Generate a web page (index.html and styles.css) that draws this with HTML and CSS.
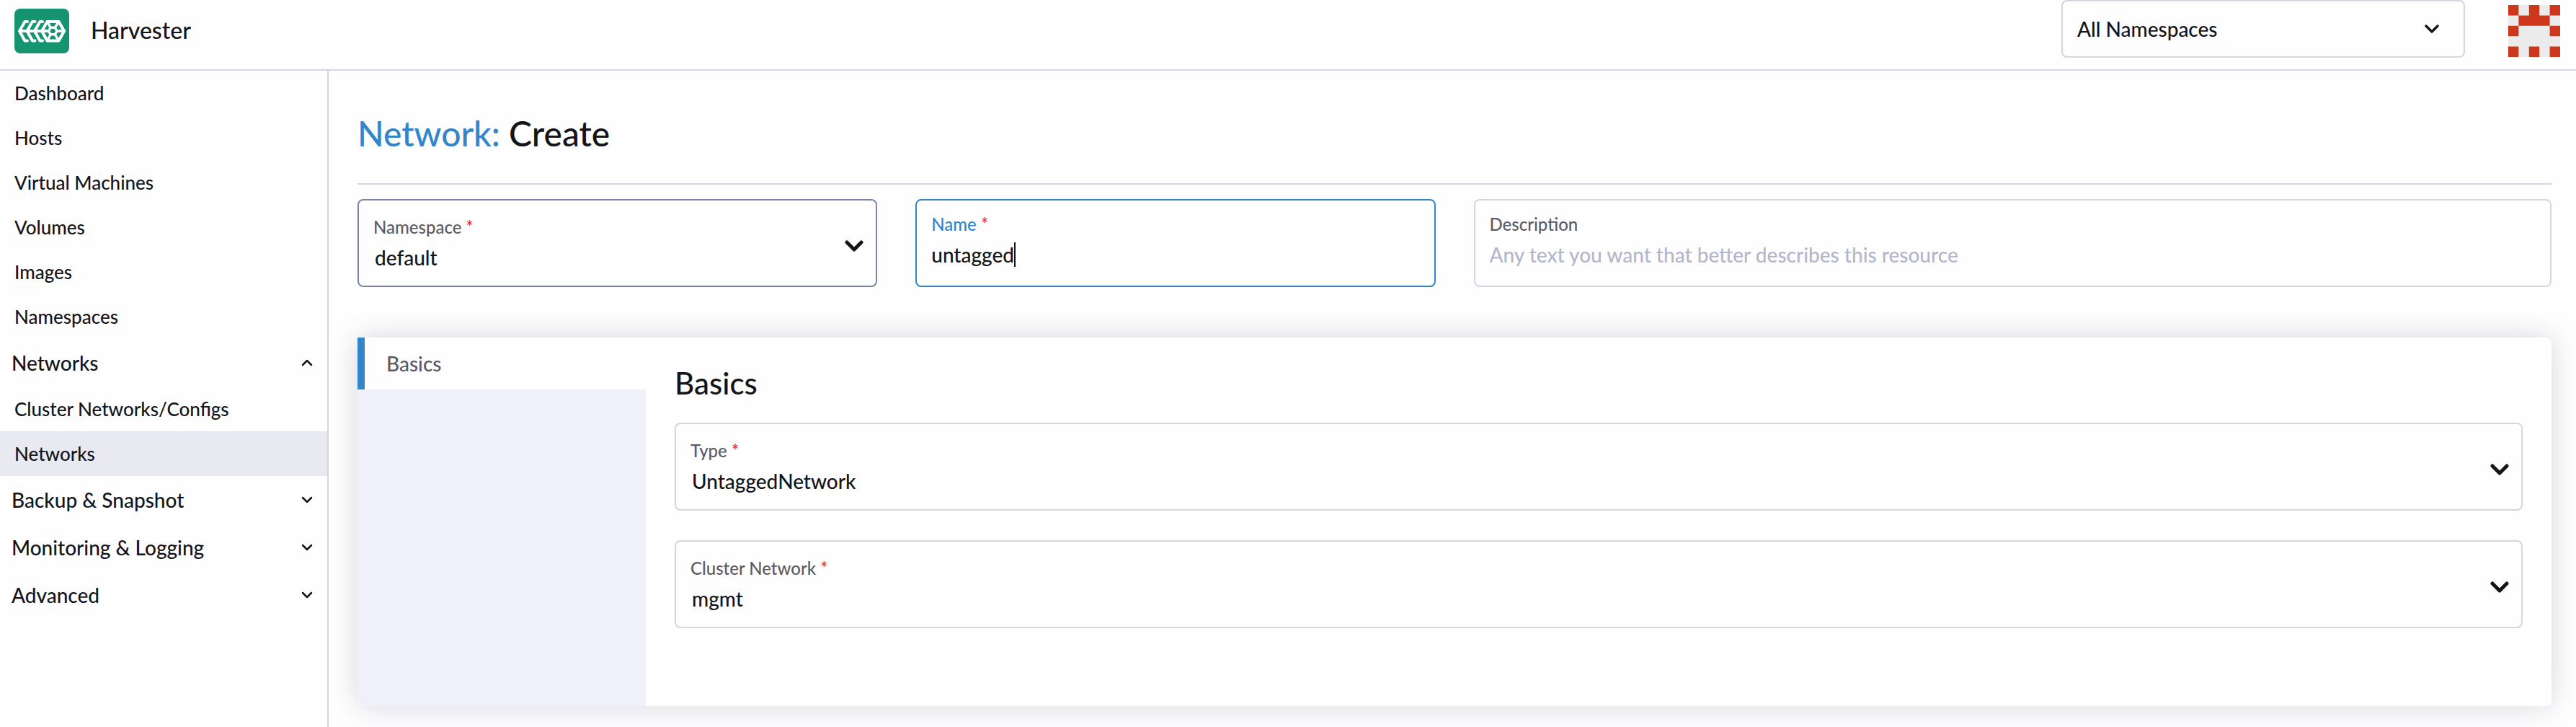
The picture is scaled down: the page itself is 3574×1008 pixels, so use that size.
FILE: index.html
```html
<!DOCTYPE html>
<html lang="en">
<head>
<meta charset="utf-8">
<title>Harvester</title>
<link rel="stylesheet" href="styles.css">
</head>
<body>
<header class="topbar">
  <a class="brand" href="#">
    <svg class="brand-logo" viewBox="0 0 76 62" aria-hidden="true">
      <rect width="76" height="62" rx="8" fill="#149570"/>
      <g fill="none" stroke="#fff" stroke-width="4" stroke-linecap="round" stroke-linejoin="round">
        <path d="M7 31H46M18 18H14.500L7 31L14.500 44.500H18M28.500 18H25L17.500 31L25 44.500H28.500M39 18H35.500L28 31L35.500 44.500H39"/>
        <path d="M45.500 18H61.500L69 31L61.500 44.500H45.500L38 31Z"/>
        <path stroke-width="3.400" d="M50.200 26.200H56.200L59 31L56.200 35.800H50.200L47.400 31Z"/>
        <path stroke-width="3.400" d="M45.500 18L50 26M61.500 18L56.500 26M69 31H59M61.500 44.500L56.500 36M45.500 44.500L50 36"/>
      </g>
    </svg>
    <span class="brand-name">Harvester</span>
  </a>
  <div class="topbar-tools">
    <div class="namespace-filter">
      <select class="select" aria-label="Namespace filter"><option>All Namespaces</option></select>
      <svg class="chevron chevron-medium" viewBox="0 0 20 12" aria-hidden="true"><path d="M2 2L10 10L18 2"/></svg>
    </div>
    <svg class="avatar" viewBox="0 0 5 5" role="img" aria-label="User">
      <path fill="#ebebeb" d="M0 0H5V5H0Z"/>
      <path fill="#cd381d" d="M0 0H1V1H0ZM2 0H3V1H2ZM4 0H5V1H4ZM1 1H4V2H1ZM0 2H1V3H0ZM4 2H5V3H4ZM0 4H1V5H0ZM2 4H3V5H2ZM4 4H5V5H4Z"/>
    </svg>
  </div>
</header>
<div class="layout">
  <nav class="sidebar">
    <a class="nav-item" href="#">Dashboard</a>
    <a class="nav-item" href="#">Hosts</a>
    <a class="nav-item" href="#">Virtual Machines</a>
    <a class="nav-item" href="#">Volumes</a>
    <a class="nav-item" href="#">Images</a>
    <a class="nav-item" href="#">Namespaces</a>
    <button class="nav-group" type="button" aria-expanded="true">Networks
      <svg class="chevron chevron-small" viewBox="0 0 16 10" aria-hidden="true"><path d="M2 8L8 2L14 8"/></svg></button>
    <a class="nav-item" href="#">Cluster Networks/Configs</a>
    <a class="nav-item nav-item-active" href="#" aria-current="page">Networks</a>
    <button class="nav-group" type="button" aria-expanded="false">Backup &amp; Snapshot
      <svg class="chevron chevron-small" viewBox="0 0 16 10" aria-hidden="true"><path d="M2 2L8 8L14 2"/></svg></button>
    <button class="nav-group" type="button" aria-expanded="false">Monitoring &amp; Logging
      <svg class="chevron chevron-small" viewBox="0 0 16 10" aria-hidden="true"><path d="M2 2L8 8L14 2"/></svg></button>
    <button class="nav-group" type="button" aria-expanded="false">Advanced
      <svg class="chevron chevron-small" viewBox="0 0 16 10" aria-hidden="true"><path d="M2 2L8 8L14 2"/></svg></button>
  </nav>
  <main class="content">
    <h1 class="page-title"><a class="page-title-link" href="#">Network:</a> Create</h1>
    <form class="form">
      <div class="identity">
        <div class="field field-select field-strong">
          <div class="field-body">
            <label class="label" for="namespace">Namespace <span class="required">*</span></label>
            <select class="select" id="namespace"><option>default</option></select>
          </div>
          <svg class="chevron chevron-large" viewBox="0 0 26 16" aria-hidden="true"><path d="M3 3L13 13L23 3"/></svg>
        </div>
        <div class="field field-focused">
          <div class="field-body">
            <label class="label" for="name">Name <span class="required">*</span></label>
            <div class="input-line">
              <input class="input input-fitted" id="name" type="text" value="untagged">
              <span class="caret"></span>
            </div>
          </div>
        </div>
        <div class="field field-wide">
          <div class="field-body">
            <label class="label" for="description">Description</label>
            <input class="input" id="description" type="text" placeholder="Any text you want that better describes this resource">
          </div>
        </div>
      </div>
      <section class="card">
        <div class="tabs" role="tablist">
          <button class="tab" type="button" role="tab" aria-selected="true">Basics</button>
        </div>
        <div class="panel" role="tabpanel">
          <h2 class="panel-title">Basics</h2>
          <div class="panel-fields">
            <div class="field field-select">
              <div class="field-body">
                <label class="label" for="type">Type <span class="required">*</span></label>
                <select class="select" id="type"><option>UntaggedNetwork</option></select>
              </div>
              <svg class="chevron chevron-large" viewBox="0 0 26 16" aria-hidden="true"><path d="M3 3L13 13L23 3"/></svg>
            </div>
            <div class="field field-select">
              <div class="field-body">
                <label class="label" for="cluster-network">Cluster Network <span class="required">*</span></label>
                <select class="select" id="cluster-network"><option>mgmt</option></select>
              </div>
              <svg class="chevron chevron-large" viewBox="0 0 26 16" aria-hidden="true"><path d="M3 3L13 13L23 3"/></svg>
            </div>
          </div>
        </div>
      </section>
    </form>
  </main>
</div>
</body>
</html>
```
FILE: styles.css
```css
*, *::before, *::after { box-sizing: border-box; }

:root {
  --text: #141419;
  --muted: #5b5b66;
  --border: #d3d5e2;
  --primary: #3186ca;
}

body {
  margin: 0;
  min-height: 100vh;
  display: flex;
  flex-direction: column;
  background: #fefefe;
  color: var(--text);
  font: 500 28px/34px Lato, "Liberation Sans", sans-serif;
}

a { color: inherit; text-decoration: none; }
button, input, select { font: inherit; color: inherit; }

/* Top bar */
.topbar {
  display: flex;
  justify-content: space-between;
  align-items: flex-start;
  height: 98px;
  padding: 0 22px 0 20px;
  border-bottom: 2px solid var(--border);
}
.brand { display: flex; align-items: center; gap: 30px; height: 86px; }
.brand-logo { width: 76px; height: 62px; }
.brand-name { padding-bottom: 2px; font-size: 32px; }
.topbar-tools { display: flex; align-items: flex-start; gap: 60px; }
.namespace-filter {
  display: flex;
  align-items: center;
  width: 560px;
  height: 80px;
  padding: 0 34px 0 20px;
  border: 2px solid var(--border);
  border-radius: 8px;
}
.avatar { width: 72px; height: 72px; margin-top: 7px; }

/* Icons */
.chevron { flex: none; fill: none; stroke: currentColor; stroke-linecap: round; stroke-linejoin: round; }
.chevron-small { width: 16px; height: 10px; stroke-width: 2.5; }
.chevron-medium { width: 20px; height: 12px; stroke-width: 3.5; }
.chevron-large { width: 26px; height: 16px; margin-top: 8px; stroke-width: 5; }

/* Sidebar */
.layout { flex: 1; display: flex; }
.sidebar { flex: none; width: 456px; border-right: 2px solid var(--border); }
.nav-item { display: flex; align-items: center; height: 62px; padding: 0 20px; font-size: 26px; }
.nav-item-active { background: #e9e9f2; }
.nav-group {
  display: flex;
  align-items: center;
  justify-content: space-between;
  width: 100%;
  height: 66px;
  padding: 0 20px 0 16px;
  border: 0;
  background: none;
}

/* Page */
.content { flex: 1; min-width: 0; padding: 0 34px 28px 40px; }
.page-title {
  margin: 0;
  padding: 58px 0 40px;
  border-bottom: 2px solid var(--border);
  font-size: 48px;
  line-height: 58px;
  font-weight: 500;
}
.page-title-link { color: var(--primary); }
.identity { display: grid; grid-template-columns: repeat(12, 1fr); column-gap: 53px; margin: 20px 0 70px; }

/* Fields */
.field {
  grid-column: span 3;
  display: flex;
  align-items: center;
  height: 122px;
  padding: 0 17px 0 20px;
  border: 2px solid var(--border);
  border-radius: 8px;
}
.field-wide { grid-column: span 6; }
.field-strong { border-color: #7c83a8; }
.field-focused { border-color: var(--primary); }
.field-focused .label { color: var(--primary); }
.field-body { flex: 1; display: flex; flex-direction: column; gap: 10px; align-self: flex-start; padding-top: 18px; }
.field-select .field-body { padding-top: 22px; }
.field-select .select { padding-left: 2px; }
.label { font-size: 24px; line-height: 30px; color: var(--muted); }
.label .required { color: #f02b35; }
.select {
  flex: 1;
  width: 100%;
  appearance: none;
  padding: 0;
  border: 0;
  background: none;
  line-height: 34px;
}
.input { width: 100%; height: 34px; padding: 0; border: 0; outline: 0; background: none; }
.input::placeholder { color: #b3b6cc; opacity: 1; }
.input-line { display: flex; align-items: center; }
.input-fitted { width: auto; field-sizing: content; }
.caret { width: 2px; height: 34px; background: var(--text); }

/* Tabbed card */
.card { display: flex; min-height: 511px; border-radius: 8px; box-shadow: 0 0 40px #d7d7e2; background: #fefefe; }
.tabs { flex: none; width: 400px; background: #f0f0fa; border-radius: 0 0 0 10px; }
.tab {
  display: block;
  width: 100%;
  height: 72px;
  padding: 0 30px;
  border: 0;
  border-left: 10px solid var(--primary);
  background: #fefefe;
  color: var(--muted);
  text-align: left;
}
.panel { flex: 1; padding: 38px 40px 40px; }
.panel-title { margin: 0 0 30px; font-size: 42px; line-height: 50px; font-weight: 500; }
.panel-fields { display: grid; gap: 41px; }
.panel-fields .field { grid-column: auto; }
```
